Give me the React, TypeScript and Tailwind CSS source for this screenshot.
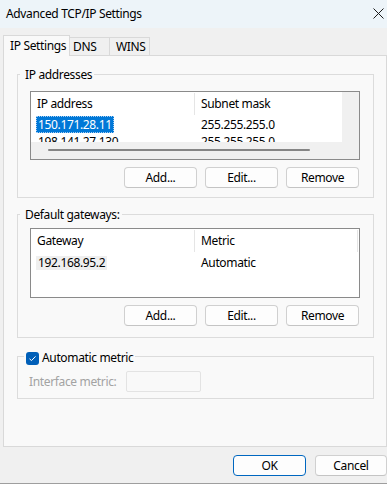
const font = { fontFamily: '"Noto Sans", "Open Sans", sans-serif' };

function Btn({ label, primary = false, w = "w-[73px]" }: { label: string; primary?: boolean; w?: string }) {
  return (
    <button
      type="button"
      className={`${w} h-[21px] shrink-0 rounded-[4px] border bg-[#fdfdfd] text-[12px] leading-none text-black ${
        primary ? "border-[#0067c0]" : "border-[#d0d0d0] border-b-[#c4c4c4]"
      }`}
    >
      {label}
    </button>
  );
}

function Group({
  legend,
  className,
  children,
}: {
  legend: React.ReactNode;
  className: string;
  children: React.ReactNode;
}) {
  return (
    <div className={`relative ml-[13px] w-[357px] border border-[#dcdcdc] ${className}`}>
      <div className="absolute left-[2px] top-[-8px] flex h-[16px] items-center whitespace-nowrap bg-[#f9f9f9] pl-[5px] pr-[2px] text-[12px] text-black">
        {legend}
      </div>
      {children}
    </div>
  );
}

function ButtonRow({ top }: { top: string }) {
  return (
    <div className={`ml-[12px] flex w-[330px] justify-end gap-[8px] pr-[1px] ${top}`}>
      <Btn label="Add..." />
      <Btn label="Edit..." />
      <Btn label="Remove" />
    </div>
  );
}

function Header({ a, b, endLine = false }: { a: string; b: string; endLine?: boolean }) {
  return (
    <div className="flex h-[24px] shrink-0 text-[12px] text-black">
      <div className="my-[1px] flex w-[164px] shrink-0 items-center border-r border-[#e5e5e5] pl-[6px]">{a}</div>
      <div
        className={`my-[1px] flex w-[163px] shrink-0 items-center pl-[6px] ${endLine ? "border-r border-[#e5e5e5]" : ""}`}
      >
        {b}
      </div>
    </div>
  );
}

export default function App() {
  return (
    <div
      style={font}
      className="relative flex h-[484px] w-[387px] flex-col overflow-hidden whitespace-nowrap bg-[#f0f0f0] text-[12px] tracking-[-0.35px] text-black"
    >
      {/* title bar */}
      <div className="flex h-[28px] shrink-0 items-center justify-between bg-[#edf4f9] pl-[6px] pr-[3px]">
        <span className="text-[12px]">Advanced TCP/IP Settings</span>
        <svg width="11" height="11" viewBox="0 0 11 11" className="mb-[2px]">
          <path d="M0.5 0.5 L10.5 10.5 M10.5 0.5 L0.5 10.5" stroke="#1a1a1a" strokeWidth="1" fill="none" />
        </svg>
      </div>

      {/* tabs */}
      <div className="mt-[7px] flex h-[20px] shrink-0 items-end pl-[3px]">
        <div className="relative z-10 -mb-[1px] flex h-[21px] w-[67px] items-center border-x border-t border-[#d9d9d9] bg-[#f9f9f9] pl-[6px]">
          IP Settings
        </div>
        <div className="flex h-[18px] w-[40px] items-center border-r border-t border-[#d9d9d9] pl-[3px]">DNS</div>
        <div className="flex h-[18px] w-[40px] items-center border-r border-t border-[#d9d9d9] pl-[6px]">WINS</div>
      </div>

      {/* tab panel */}
      <div className="ml-[3px] flex h-[392px] w-[384px] shrink-0 flex-col border border-[#d9d9d9] bg-[#f9f9f9]">
        <Group legend="IP addresses" className="mt-[18px] h-[124px]">
          <div className="ml-[12px] mt-[16px] flex h-[69px] w-[330px] flex-col border border-[#8a8a8a] bg-white">
            <div className="flex h-[50px] shrink-0">
              <div className="h-[50px] w-[311px] overflow-hidden">
                <Header a="IP address" b="Subnet mask" />
                <div className="flex h-[17px] items-center">
                  <div className="w-[164px] shrink-0 pl-[5px]">
                    <span className="inline-flex h-[17px] items-center border border-dotted border-[#a9cdf3] bg-[#0078d7] px-[1px] text-white">
                      150.171.28.11
                    </span>
                  </div>
                  <div className="pl-[6px]">255.255.255.0</div>
                </div>
                <div className="flex h-[17px] items-center">
                  <div className="w-[164px] shrink-0 pl-[7px]">198.141.27.130</div>
                  <div className="pl-[6px]">255.255.255.0</div>
                </div>
              </div>
              <div className="h-[50px] w-[17px] bg-[#f0f0f0]" />
            </div>
            <div className="flex h-[17px] shrink-0 items-start bg-[#f0f0f0] pl-[17px] pt-[7px]">
              <div className="h-[2px] w-[262px] rounded-full bg-[#858585]" />
            </div>
          </div>
          <ButtonRow top="mt-[7px]" />
        </Group>

        <Group legend="Default gateways:" className="mt-[16px] h-[124px]">
          <div className="ml-[12px] mt-[13px] flex h-[70px] w-[330px] flex-col border border-[#8a8a8a] bg-white">
            <Header a="Gateway" b="Metric" endLine />
            <div className="mt-[3px] flex h-[14px] items-center">
              <div className="w-[164px] shrink-0 pl-[5px]">
                <span className="inline-flex h-[14px] items-center bg-[#efefef] px-[2px]">192.168.95.2</span>
              </div>
              <div className="pl-[6px]">Automatic</div>
            </div>
          </div>
          <ButtonRow top="mt-[7px]" />
        </Group>

        <div className="relative ml-[13px] mt-[18px] h-[43px] w-[357px] border border-[#dcdcdc]">
          <div className="absolute left-[6px] top-[-7px] flex h-[16px] items-center gap-[3px] bg-[#f9f9f9] px-[2px]">
            <span className="flex h-[13px] w-[13px] items-center justify-center rounded-[3px] bg-[#005fb8]">
              <svg width="9" height="9" viewBox="0 0 9 9">
                <path d="M1.5 4.8 L3.5 6.6 L7.5 2.4" stroke="#ffffff" strokeWidth="1" fill="none" />
              </svg>
            </span>
            <span>Automatic metric</span>
          </div>
          <div className="mt-[14px] flex items-center pl-[11px]">
            <span className="w-[97px] shrink-0 text-[#a3a3a3]">Interface metric:</span>
            <div className="h-[21px] w-[75px] rounded-[2px] border border-[#e3e3e3] bg-[#f9f9f9]" />
          </div>
        </div>
      </div>

      {/* dialog buttons */}
      <div className="mt-[8px] flex shrink-0 justify-end gap-[9px]">
        <Btn label="OK" primary />
        <Btn label="Cancel" w="w-[72px]" />
      </div>

      <div className="mt-auto h-[1px] shrink-0 bg-[#9e9e9e]" />
    </div>
  );
}
